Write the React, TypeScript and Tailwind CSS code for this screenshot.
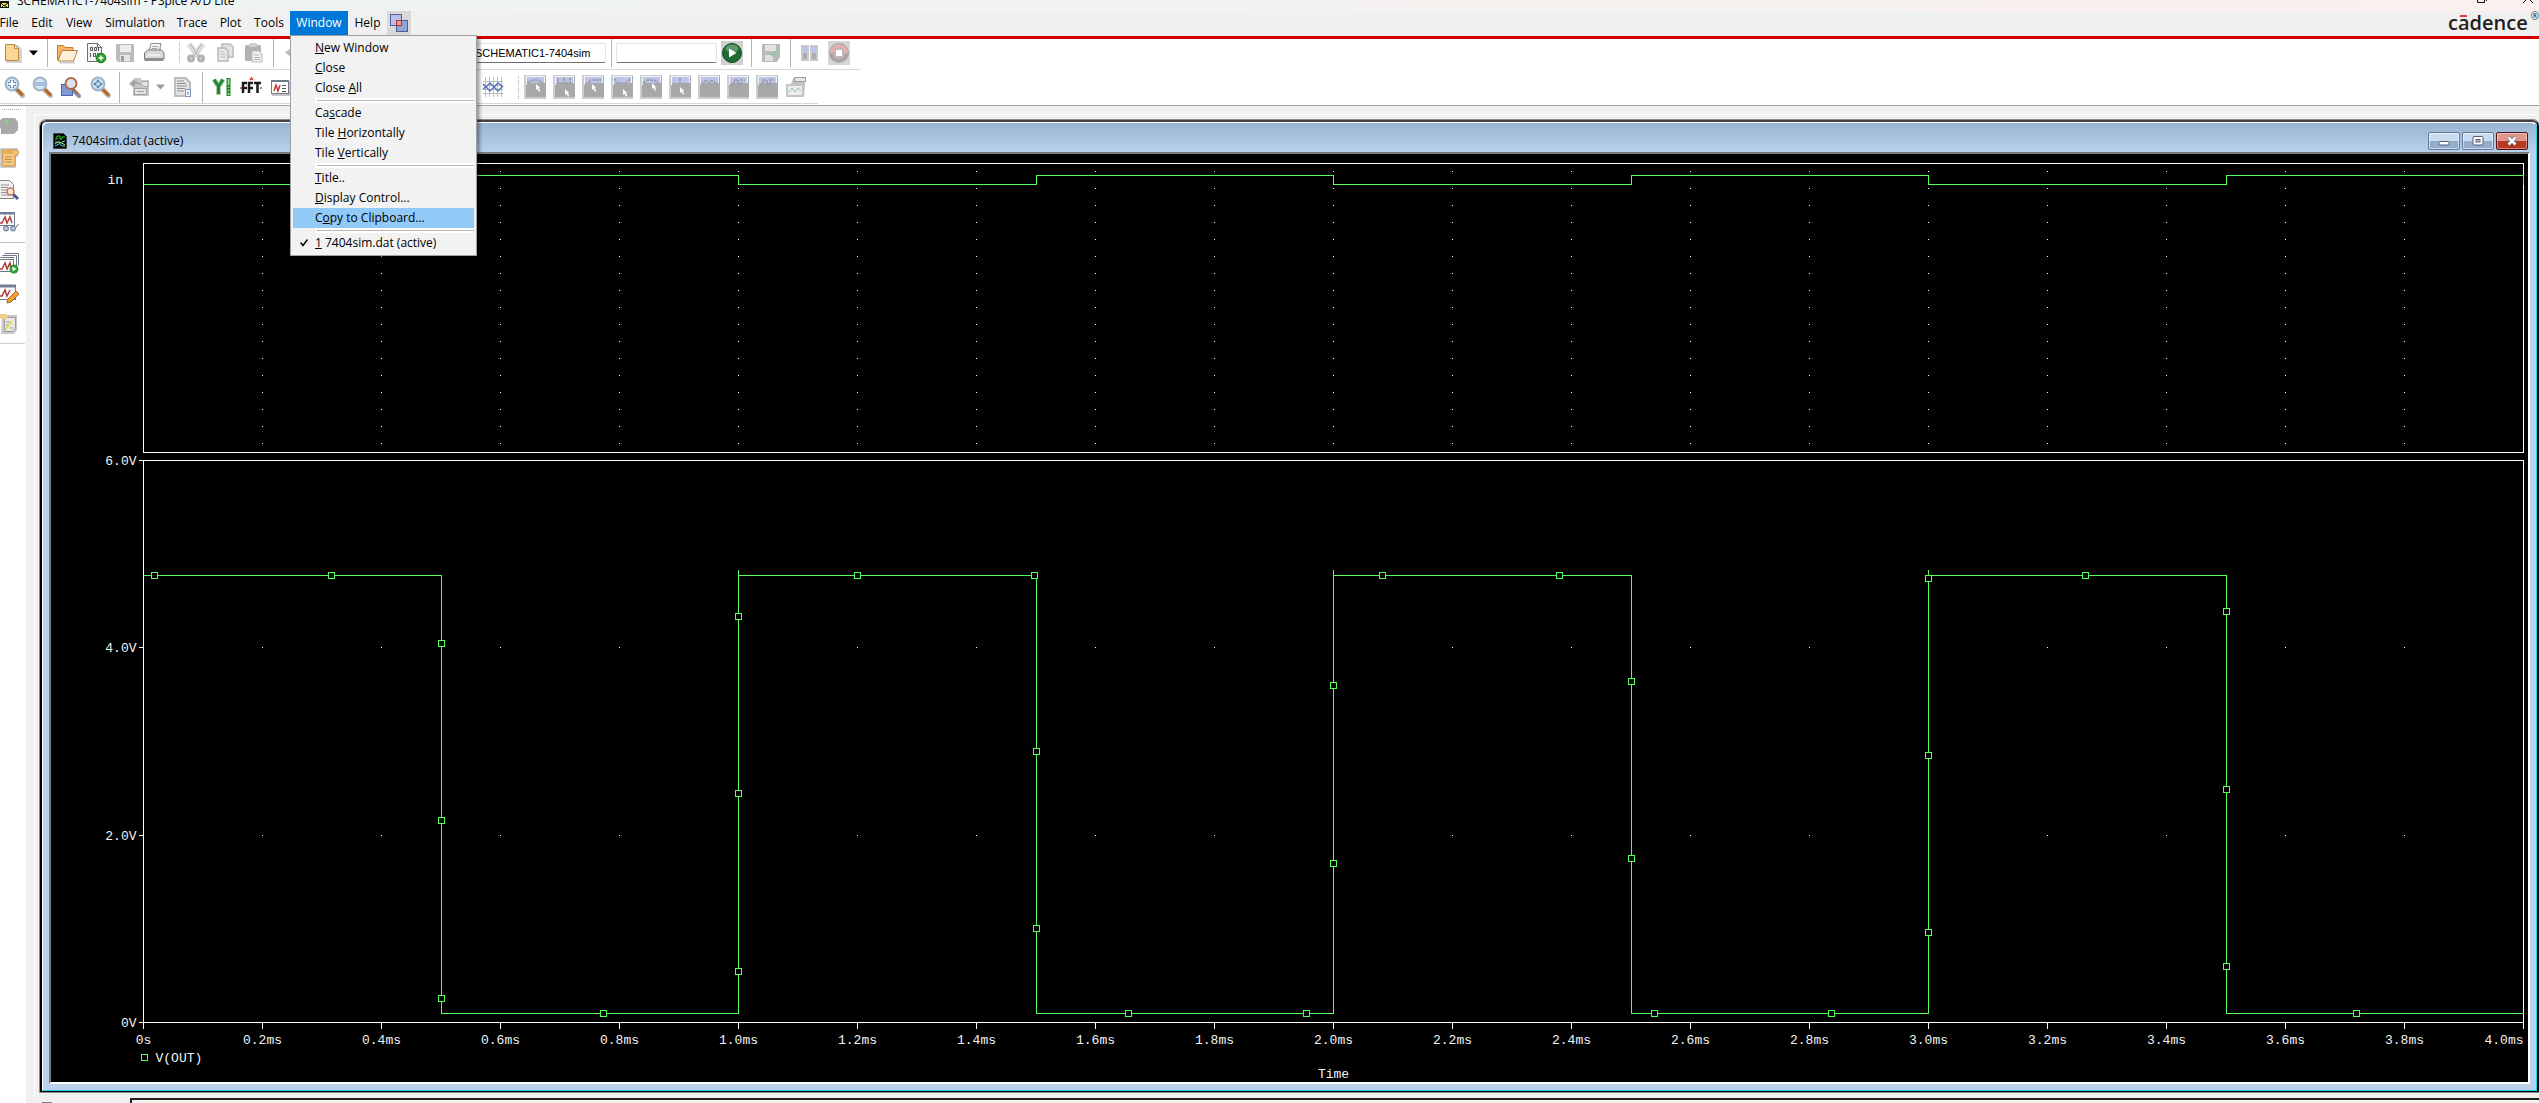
import type { ReactNode } from "react"
import clsx from "clsx"

const MENUS = [
  { label: "File", width: "w-[25px] pr-[7px]" },
  { label: "Edit", width: "w-[34px]" },
  { label: "View", width: "w-[40px]" },
  { label: "Simulation", width: "w-[72px]" },
  { label: "Trace", width: "w-[42px]" },
  { label: "Plot", width: "w-[35px]" },
  { label: "Tools", width: "w-[42px]" },
]

/* ---------- toolbar pieces ---------- */

function Tool({ label, children, className }: { label: string; children: ReactNode; className?: string }) {
  return (
    <button
      type="button"
      aria-label={label}
      className={clsx("flex shrink-0 items-center justify-center", className ?? "w-[29px]")}
    >
      {children}
    </button>
  )
}

function Icon({ children }: { children: ReactNode }) {
  return (
    <svg width="22" height="22" viewBox="0 0 22 22" fill="none" className="shrink-0">
      {children}
    </svg>
  )
}

function Sep() {
  return (
    <div className="flex h-full w-[10px] shrink-0 justify-center">
      <div className="h-full w-px bg-[#b4b4b4]" />
    </div>
  )
}

function Grip() {
  return (
    <div className="flex h-full w-[13px] shrink-0 justify-end py-1">
      <div className="mr-px h-full border-l border-dotted border-[#b0b0b0]" />
    </div>
  )
}

function Caret({ color }: { color: string }) {
  return (
    <svg width="10" height="6" viewBox="0 0 10 6">
      <path d="M0 0.5h9L4.5 5.5z" fill={color} />
    </svg>
  )
}

function Lens({ children }: { children?: ReactNode }) {
  return (
    <Icon>
      <path d="M13 13l6.5 6.500" stroke="#b9b9b9" strokeWidth="5" strokeLinecap="round" />
      <path d="M13.500 13l5.500 5.500" stroke="#b5651d" strokeWidth="3" strokeLinecap="round" />
      <circle cx="9" cy="8" r="6.400" fill="#d5e6f5" stroke="#9fb2c6" strokeWidth="2" />
      {children}
    </Icon>
  )
}

function CursorTool({ shape, arrow }: { shape: string; arrow?: [number, number] }) {
  return (
    <svg width="22" height="24" viewBox="0 0 22 24" fill="none">
      <rect width="22" height="24" fill="#cdcdcd" />
      <rect x="2" y="1" width="20" height="21" fill="#a8a8a8" />
      <rect x="2.500" y="1.500" width="18" height="8" fill="#bcc4ea" stroke="#f4f4f4" />
      <rect x="3" y="8" width="18" height="14" fill="#a8a8a8" />
      <path d={shape} stroke="#9da1b2" strokeWidth="2" strokeDasharray="3 1" />
      {arrow && (
        <path
          d={`M${arrow[0]} ${arrow[1]}v6l1.500-1.200l1.500 3l1.300-.7l-1.500-2.800h1.600z`}
          fill="#ffffff"
        />
      )}
    </svg>
  )
}

const CURSOR_TOOLS: { label: string; shape: string; arrow?: [number, number] }[] = [
  { label: "Cursor peak", shape: "M3 8c3-1 4-3 8-3s5 2 8 3", arrow: [12, 9] },
  { label: "Cursor trough", shape: "M5 3v5h12v-5M11 3v5", arrow: [12, 14] },
  { label: "Cursor slope", shape: "M3 9c4 0 4-4 8-4h8", arrow: [10, 9] },
  { label: "Cursor min", shape: "M3 4l4 4h8l4-4", arrow: [12, 14] },
  { label: "Cursor max", shape: "M3 8l5-3h6l5 3", arrow: [12, 8] },
  { label: "Cursor point", shape: "M11 3v6", arrow: [11, 12] },
  { label: "Cursor search", shape: "M3 9l4-3h2l2 2l2-2h2l4 3" },
  { label: "Cursor next transition", shape: "M4 10h3v-5h4v5h3v-5h4" },
  { label: "Cursor previous transition", shape: "M4 10h3v-5h4v5h3v-5h4" },
]

function MainToolbar() {
  return (
    <div className="flex h-[31px] w-[860px] border-b border-[#d6d6d6] pb-[2px]">
      <Tool label="New" className="w-[26px]">
        <Icon>
          <path d="M4 3h12l4 4v14H4z" fill="#d2d2d2" />
          <path d="M3.500 2.500h9l4 4v12h-13z" fill="#f7d792" stroke="#b98a3f" />
          <path d="M12.500 2.500v4h4z" fill="#fff3d0" stroke="#b98a3f" />
        </Icon>
      </Tool>
      <Tool label="New options" className="w-[16px]">
        <Caret color="#000000" />
      </Tool>
      <Sep />
      <Tool label="Open">
        <Icon>
          <path d="M1.500 18V3.500h6l1.500 2h8v3" fill="#f2b565" stroke="#c97b2c" />
          <path d="M2 19L6 8.500h15.500L17.500 19z" fill="#fdf0d8" stroke="#b77b3c" />
          <path d="M3 20.500h16" stroke="#cccccc" strokeWidth="2" />
        </Icon>
      </Tool>
      <Tool label="New simulation profile">
        <Icon>
          <path d="M2.500 1.500h10l4 4v14h-14z" fill="#f4f4f4" stroke="#707070" />
          <path d="M12.500 1.500v4h4z" fill="#ffffff" stroke="#707070" />
          <path d="M5.500 5.500h2v3h-2zM9.500 5.500h2v3h-2zM13.500 9V5M5.500 11v4M8.500 11.500h2v3h-2zM12.500 11v3" stroke="#555555" />
          <circle cx="16" cy="16" r="4.800" fill="#2fa02f" stroke="#1b7a1b" />
          <path d="M16 13.500v5M13.500 16h5" stroke="#ffffff" strokeWidth="1.500" />
        </Icon>
      </Tool>
      <Tool label="Save">
        <Icon>
          <path d="M2 2h18v18H4l-2-2z" fill="#bcbcbc" />
          <rect x="6" y="3" width="11" height="7" fill="#ececec" />
          <rect x="6" y="13" width="10" height="6" fill="#e6e6e6" />
          <rect x="7" y="14" width="3" height="5" fill="#9d9d9d" />
        </Icon>
      </Tool>
      <Tool label="Print">
        <Icon>
          <path d="M6 9l2-7.500h10L16.500 9z" fill="#f6f6f6" stroke="#8d8d8d" />
          <path d="M1.500 11l3-3h14l2.500 3v6h-19.500z" fill="#dadada" stroke="#777777" />
          <path d="M1.500 16h19v3h-19z" fill="#8f8f8f" />
          <path d="M5 13h12" stroke="#ffffff" />
          <path d="M9 4.500h6M8.500 6.500h6" stroke="#a5a5a5" />
        </Icon>
      </Tool>
      <Grip />
      <Tool label="Cut">
        <Icon>
          <path d="M4 2l9 12M18 2l-9 12" stroke="#d0d0d0" strokeWidth="5" />
          <path d="M4 2l9 12M18 2l-9 12" stroke="#f0f0f0" strokeWidth="2" />
          <path d="M5 2l8 12M17 2l-8 12" stroke="#b0b0b0" />
          <circle cx="6" cy="16.500" r="2.500" fill="#dddddd" stroke="#b2b2b2" strokeWidth="3" />
          <circle cx="16" cy="16.500" r="2.500" fill="#dddddd" stroke="#b2b2b2" strokeWidth="3" />
        </Icon>
      </Tool>
      <Tool label="Copy">
        <Icon>
          <path d="M8 2h8l3 3v10H8z" fill="#e2e2e2" stroke="#b8b8b8" strokeWidth="1.500" />
          <path d="M4 6h7l3 3v10H4z" fill="#e9e9e9" stroke="#b8b8b8" strokeWidth="1.500" />
          <path d="M6 10h5M6 12.500h6M6 15h6" stroke="#c2c2c2" />
        </Icon>
      </Tool>
      <Tool label="Paste">
        <Icon>
          <rect x="2" y="3" width="16" height="16" rx="1.500" fill="#b2b2b2" />
          <rect x="6" y="1" width="8" height="4" rx="1" fill="#cfcfcf" />
          <path d="M9 9h7l3 3v8H9z" fill="#efefef" stroke="#bdbdbd" />
          <path d="M11 13h5M11 15.500h6M11 17.500h6" stroke="#b8b8b8" />
        </Icon>
      </Tool>
      <Sep />
      <Tool label="Undo">
        <Icon>
          <path d="M9 6L3 10.500l6 4.500v-3c5 0 7 1 8 5c1-6-3-8-8-8z" fill="#c4b9ae" />
        </Icon>
      </Tool>
      <div className="flex grow items-center justify-end">
        <select
          aria-label="Simulation profile"
          className="h-[20px] w-[136px] appearance-none rounded-xs border border-[#e2e2e2] border-b-[#707070] bg-white pl-1 font-['Liberation_Sans'] text-[11px] leading-4 text-black"
        >
          <option>SCHEMATIC1-7404sim</option>
        </select>
      </div>
      <Sep />
      <div className="flex w-[101px] shrink-0 items-center">
        <input
          aria-label="Run to time"
          className="h-[20px] w-full rounded-xs border border-[#e2e2e2] border-b-[#707070] bg-white px-1 text-[11px]"
        />
      </div>
      <Tool label="Run">
        <svg width="22" height="24" viewBox="0 0 22 24">
          <rect width="22" height="24" fill="#cfcfcf" />
          <circle cx="11" cy="12" r="9.500" fill="#1f6b34" stroke="#144d24" />
          <ellipse cx="11" cy="7.500" rx="6.500" ry="4" fill="#5c9a6b" />
          <path d="M8 7.500v9l7.500-4.500z" fill="#ffffff" />
        </svg>
      </Tool>
      <Sep />
      <Tool label="Save check point">
        <Icon>
          <path d="M2 2h18v13l-3 5H2z" fill="#bababa" />
          <rect x="5" y="3" width="11" height="6" fill="#e4e4e4" />
          <rect x="5" y="13" width="8" height="6" fill="#dedede" />
          <path d="M10 11l3 3l6-7" stroke="#8cc995" strokeWidth="1.500" />
        </Icon>
      </Tool>
      <Sep />
      <Tool label="Pause">
        <Icon>
          <rect x="2" y="3" width="8" height="16" fill="#c8c8c8" />
          <rect x="11" y="3" width="8" height="16" fill="#c8c8c8" />
          <rect x="4" y="4" width="4" height="7" fill="#b9c4e8" />
          <rect x="13" y="4" width="4" height="7" fill="#b9c4e8" />
          <path d="M4 11h4v6H4zM13 11h4v6h-4z" fill="#acacac" />
        </Icon>
      </Tool>
      <Tool label="Stop">
        <svg width="22" height="24" viewBox="0 0 22 24">
          <rect width="22" height="24" fill="#d6d6d6" />
          <circle cx="11" cy="12" r="10" fill="#a6a6a6" />
          <path d="M2 12a9 9 0 0 1 18 0z" fill="#e9b0b0" />
          <circle cx="11" cy="12" r="6" fill="#c9b4b4" />
          <rect x="8" y="9" width="6" height="6" fill="#ffffff" />
        </svg>
      </Tool>
      <div className="w-[7px] shrink-0" />
    </div>
  )
}

function ProbeToolbar() {
  return (
    <div className="flex h-[35px] w-[818px] border-b border-[#d6d6d6] pt-[2px]">
      <Tool label="Zoom in" className="w-[27px]">
        <Lens>
          <path d="M9 4v8M5 8h8" stroke="#6f90b4" strokeWidth="4" />
          <path d="M9 4.500v7M5.500 8h7" stroke="#ffffff" strokeWidth="2" />
        </Lens>
      </Tool>
      <Tool label="Zoom out">
        <Lens>
          <path d="M4.500 8h9" stroke="#5f86b0" strokeWidth="3" />
          <path d="M5 8h8" stroke="#ffffff" />
        </Lens>
      </Tool>
      <Tool label="Zoom area">
        <Icon>
          <path d="M12 13l7 7" stroke="#8c8fa8" strokeWidth="4" strokeLinecap="round" />
          <path d="M13 13l5 5" stroke="#b5651d" strokeWidth="2" />
          <rect x="1.500" y="8.500" width="11" height="11" fill="#7d9ad6" stroke="#4b67ab" />
          <circle cx="11" cy="7.500" r="5.500" fill="#dbe4f3" stroke="#b06a4a" strokeWidth="2" />
        </Icon>
      </Tool>
      <Tool label="Zoom fit">
        <Lens>
          <path d="M9 3l2.500 3.500h-5zM9 13l2.500-3.500h-5zM4 8l3.500-2.500v5zM14 8l-3.500-2.500v5z" fill="#5f86b0" />
        </Lens>
      </Tool>
      <Sep />
      <Tool label="Replot">
        <Icon>
          <path d="M1 8l6-6h6v2h8v16H5v-8z" fill="#c6c6c6" />
          <path d="M2 7l5-4v3c4 0 6 1 7 4c-2-2-4-2-7-2v3z" fill="#a2a2a2" />
          <path d="M14 5.500h6v5h-4" fill="#e6e6e6" stroke="#a8a8a8" />
          <rect x="6.500" y="12.500" width="12" height="6" fill="#e4e4e4" stroke="#9f9f9f" />
          <path d="M9 15.500h7" stroke="#9f9f9f" />
        </Icon>
      </Tool>
      <Tool label="Replot options" className="w-[15px]">
        <Caret color="#9a9a9a" />
      </Tool>
      <Tool label="Log">
        <Icon>
          <path d="M2 1h12l5 5v15H2z" fill="#bdbdbd" />
          <path d="M4 3h9l4 4v12H4z" fill="#e3e3e3" />
          <path d="M5 5h7M5 7.500h9M5 10h10M5 12.500h8M5 15h7" stroke="#8f8f8f" />
          <rect x="13.500" y="13.500" width="5" height="7" fill="#f7f9ff" stroke="#8295bb" />
          <path d="M16 15.500v3" stroke="#5674b0" />
        </Icon>
      </Tool>
      <Sep />
      <Tool label="Add Y axis">
        <Icon>
          <path d="M3 3.500l4.500 7V19M12 3.500l-4.500 7" stroke="#b5c8b5" strokeWidth="5" />
          <path d="M3 3.500l4.500 7V18M12 3.500l-4.500 7" stroke="#1f8a2d" strokeWidth="3" />
          <path d="M17.500 2v18" stroke="#1f8a2d" strokeWidth="4" />
          <path d="M17.500 3v6M17.500 11v1M17.500 14v1M17.500 17v2" stroke="#a6e0a6" strokeWidth="1.500" />
        </Icon>
      </Tool>
      <Tool label="Fourier transform">
        <svg width="24" height="22" viewBox="0 0 24 22" fill="none">
          <path d="M1 12h2M21 12h2M11 4l1.500-2L14 4" stroke="#d23b3b" strokeWidth="1.500" />
          <path d="M4 17V7h4M4 12h4M10 17V7h4M10 12h4M15 7h7M18.500 7v10" stroke="#1a1a1a" strokeWidth="2.500" />
        </svg>
      </Tool>
      <Tool label="Performance analysis">
        <Icon>
          <rect x="3" y="5" width="18" height="15" fill="#c4c4c4" />
          <rect x="2.500" y="4.500" width="17" height="13" fill="#ffffff" stroke="#6f7a8c" />
          <path d="M2 5h18" stroke="#6f7a8c" strokeWidth="2" />
          <path d="M5 15l2-6l2 6l2-6" stroke="#c0392b" strokeWidth="1.500" />
          <path d="M13 9.500h4M13 12.500h4M13 15.500h4" stroke="#555555" />
        </Icon>
      </Tool>
      <div className="w-[184px] shrink-0" />
      <Tool label="Mark data points">
        <Icon>
          <path d="M3.500 1v20M7.500 1v20M11.500 1v20M15.500 1v20M19.500 1v20M1 5.500h20M1 9.500h20M1 13.500h20M1 17.500h20" stroke="#bdbdbd" />
          <path d="M1 8l3 3l4-4l4 4l4-4l5 4M1 13l3-2l4 4l4-4l4 4l5-5" stroke="#5b74b8" strokeWidth="1.500" />
        </Icon>
      </Tool>
      <Grip />
      {CURSOR_TOOLS.map((tool) => (
        <Tool key={tool.label} label={tool.label}>
          <CursorTool shape={tool.shape} arrow={tool.arrow} />
        </Tool>
      ))}
      <Tool label="Mark label">
        <Icon>
          <path d="M1 8h5l2-6h12v8l-1 11H1z" fill="#c4c4c4" />
          <rect x="9.500" y="1.500" width="11" height="4" fill="#e6e6e6" stroke="#9a9a9a" />
          <rect x="3" y="10" width="14" height="9" fill="#ececec" />
          <path d="M4 16l3-4l3 4l3-4l3 3" stroke="#9abf9e" />
        </Icon>
      </Tool>
    </div>
  )
}

/* ---------- left side bar ---------- */

function SideBar() {
  return (
    <aside className="flex w-[26px] shrink-0 flex-col bg-white pt-[3px]">
      <div className="mr-[5px] ml-[2px] border-t border-dotted border-[#a8a8a8]" />
      <div className="flex w-[18px] flex-col pb-1">
        <Tool label="Messages" className="h-8 w-[18px]">
          <Icon>
            <path d="M5 3h12l3 4v8l-4 4H3v-5l-2-2V6z" fill="#a9a9a9" />
            <path d="M8 8l2-2" stroke="#79e079" strokeWidth="2" />
          </Icon>
        </Tool>
        <Tool label="Output script" className="h-8 w-[18px]">
          <Icon>
            <path d="M1 1h19v9h-2v11H1z" fill="#cfcfcf" />
            <path d="M4 3h14a2 2 0 0 1 0 5h-1v11H5c-2 0-2-3 0-3z" fill="#f5c986" stroke="#c48a3a" />
            <path d="M4 3h12v4H4z" fill="#e9ad55" />
            <path d="M7 10h7M7 12.500h7M7 15h7" stroke="#c48a3a" />
          </Icon>
        </Tool>
        <Tool label="View output file" className="h-8 w-[18px]">
          <Icon>
            <path d="M1.500 1.500h10l4 4v14h-14z" fill="#f3f3f3" stroke="#858585" />
            <path d="M3 6h8M3 8.500h7M3 11h6M3 13.500h6M3 16h9" stroke="#8f8f8f" />
            <path d="M15 15l5 5" stroke="#4b5f8e" strokeWidth="3" />
            <circle cx="12.500" cy="12.500" r="3.500" fill="#fbe3d3" stroke="#c27b55" strokeWidth="1.500" />
          </Icon>
        </Tool>
        <Tool label="View results" className="h-8 w-[18px]">
          <Icon>
            <rect x="1.500" y="1.500" width="15" height="13" fill="#ffffff" stroke="#717e95" />
            <path d="M1 2.500h16" stroke="#717e95" strokeWidth="2" />
            <path d="M2 12h2l3-6l2 6l3-6l2 6" stroke="#b23a3a" strokeWidth="1.500" />
            <circle cx="8" cy="17.500" r="2.500" fill="#b9c4df" stroke="#65718f" />
            <circle cx="15" cy="17.500" r="2.500" fill="#b9c4df" stroke="#65718f" />
            <path d="M17.500 17l3-4" stroke="#65718f" />
          </Icon>
        </Tool>
      </div>
      <div className="mr-px border-t border-[#bdbdbd]" />
      <div className="flex w-[18px] flex-col py-1">
        <Tool label="Run queue" className="h-8 w-[18px]">
          <Icon>
            <path d="M6.500 1.500h14v12M4.500 3.500h14v12M2.500 5.500h14" stroke="#6d7686" />
            <rect x="1.500" y="7.500" width="14" height="12" fill="#ffffff" stroke="#6d7686" />
            <path d="M2 17h2l3-6l2 6l3-6l1 6" stroke="#b23a3a" strokeWidth="1.500" />
            <circle cx="16" cy="17" r="4.500" fill="#2d9c37" />
            <path d="M14.500 14.500v5l4-2.500z" fill="#ffffff" />
          </Icon>
        </Tool>
        <Tool label="Edit profile" className="h-[30px] w-[18px]">
          <Icon>
            <rect x="1.500" y="2.500" width="16" height="14" fill="#ffffff" stroke="#717e95" />
            <path d="M1 3h17" stroke="#717e95" strokeWidth="3" />
            <path d="M2 13h2l3-6l2 6l3-6" stroke="#b23a3a" strokeWidth="1.500" />
            <path d="M9 20l1-4l8-8l3 3l-8 8z" fill="#f3a32b" stroke="#a8621a" />
          </Icon>
        </Tool>
        <Tool label="Edit notes" className="h-[30px] w-[18px]">
          <Icon>
            <path d="M4 2h15v15l-3 4H3z" fill="#c9c9c9" />
            <path d="M6.500 4.500h11v11l-3 3h-8z" fill="#e8e8e8" stroke="#9a9a9a" />
            <path d="M0 1h8l3 3l-3 2H3z" fill="#efcf8d" />
            <path d="M7 17l7-9" stroke="#e5dc4b" strokeWidth="2" />
            <path d="M8 9h4M8 12h2M12 15h3" stroke="#a0a0a0" />
          </Icon>
        </Tool>
      </div>
      <div className="mr-px border-t border-[#cfcfcf]" />
    </aside>
  )
}

/* ---------- Window drop-down ---------- */

function MenuItem({ children, active, checked }: { children: ReactNode; active?: boolean; checked?: boolean }) {
  return (
    <button
      type="button"
      role="menuitem"
      className={clsx("flex h-5 w-full items-center text-left whitespace-nowrap", active && "bg-[#91c9f7]")}
    >
      <span className="flex w-[22px] shrink-0 justify-center">
        {checked && (
          <svg width="8" height="8" viewBox="0 0 8 8" fill="none">
            <path d="M0.500 3.500l2.500 3l4.500-6" stroke="#000000" strokeWidth="1.500" />
          </svg>
        )}
      </span>
      <span>{children}</span>
    </button>
  )
}

function MenuLine() {
  return (
    <div className="ml-[22px] flex h-[5px] items-center bg-white pl-[2px]">
      <div className="h-px w-full bg-[#b8b8b8]" />
    </div>
  )
}

function WindowMenu() {
  return (
    <div
      role="menu"
      className="absolute top-6 left-0 z-10 w-[187px] border border-[#a0a0a0] bg-[#f2f2f2] p-[2px] text-black shadow-[3px_3px_3px_rgba(0,0,0,0.35)]"
    >
      <MenuItem><u>N</u>ew Window</MenuItem>
      <MenuItem><u>C</u>lose</MenuItem>
      <MenuItem>Close <u>A</u>ll</MenuItem>
      <MenuLine />
      <MenuItem>Ca<u>s</u>cade</MenuItem>
      <MenuItem>Tile <u>H</u>orizontally</MenuItem>
      <MenuItem>Tile <u>V</u>ertically</MenuItem>
      <MenuLine />
      <MenuItem><u>T</u>itle..</MenuItem>
      <MenuItem><u>D</u>isplay Control...</MenuItem>
      <MenuItem active>C<u>o</u>py to Clipboard...</MenuItem>
      <MenuLine />
      <MenuItem checked><u>1</u> 7404sim.dat (active)</MenuItem>
    </div>
  )
}

function MenuBar() {
  return (
    <nav className="flex h-[25px] bg-[#f0f0f0]">
      {MENUS.map((menu) => (
        <button
          key={menu.label}
          type="button"
          className={clsx("flex h-6 shrink-0 items-center justify-center whitespace-nowrap", menu.width)}
        >
          {menu.label}
        </button>
      ))}
      <div className="relative w-[58px] shrink-0">
        <button type="button" aria-expanded="true" className="h-6 w-full bg-[#0078d7] text-white">
          Window
        </button>
        <WindowMenu />
      </div>
      <button type="button" className="h-6 w-[39px] shrink-0">
        Help
      </button>
      <button type="button" aria-label="Switch window" className="flex h-6 w-6 items-center justify-center bg-[#d9d9d9]">
        <svg width="20" height="20" viewBox="0 0 20 20">
          <rect x="1.500" y="1.500" width="11" height="11" fill="#b6c1e3" stroke="#4c5f9b" />
          <rect x="7.500" y="7.500" width="11" height="11" fill="#93a5d8" stroke="#4c5f9b" />
          <rect x="7.500" y="7.500" width="5" height="5" fill="#e79a9a" stroke="#b53434" />
        </svg>
      </button>
      <div className="ml-auto flex items-start gap-[3px] text-[#231f20]">
        <span className="text-xl leading-6 font-semibold">
          c
          <span className="relative">
            a
            <span className="absolute top-[6px] left-[2px] h-[2px] w-[7px] bg-[#e03a3a]" />
          </span>
          dence
        </span>
        <span className="text-[10px] leading-[10px]">®</span>
      </div>
    </nav>
  )
}

/* ---------- waveform chart ---------- */

const LEFT = 92
const RIGHT = 2472
const DIV = 119
const EDGES = [390, 687, 985, 1282, 1580, 1877, 2175]
const HIGH = 421
const LOW = 859

const MARKERS: [number, number][] = [
  [103, 421], [280, 421], [390, 489], [390, 666], [390, 844], [552, 859],
  [687, 817], [687, 639], [687, 462], [806, 421], [983, 421], [985, 597], [985, 774],
  [1077, 859], [1255, 859], [1282, 709], [1282, 531], [1331, 421], [1508, 421],
  [1580, 527], [1580, 704], [1603, 859], [1780, 859], [1877, 778], [1877, 601], [1877, 424],
  [2034, 421], [2175, 457], [2175, 635], [2175, 812], [2305, 859],
]

const timeLabel = (i: number) => (i === 0 ? "0s" : `${(i * 0.2).toFixed(1)}ms`)

function inputPath() {
  let d = `M${LEFT} 30`
  EDGES.forEach((x, i) => {
    d += `H${x}V${i % 2 === 0 ? 21 : 30}`
  })
  return `${d}H${RIGHT}V30`
}

// rising edges overshoot the flat top by a few pixels
function outputPath() {
  let d = `M${LEFT} ${HIGH}`
  EDGES.forEach((x, i) => {
    d += i % 2 === 0 ? `H${x}V${LOW}` : `H${x}V415V${HIGH}`
  })
  return `${d}H${RIGHT}`
}

function Chart() {
  const columns = Array.from({ length: 19 }, (_, i) => LEFT + DIV * (i + 1))
  const rows = Array.from({ length: 17 }, (_, i) => 17 + 17 * i)

  return (
    <svg viewBox="0 0 2477 928" className="block h-auto w-full bg-black" shapeRendering="crispEdges" fill="none">
      <g transform="translate(0.5 0.5)">
        <g fill="#ffffff">
          {columns.map((x) =>
            [...rows, 493, 681].map((y) => <rect key={`${x}-${y}`} x={x - 0.5} y={y - 0.5} width="1" height="1" />)
          )}
        </g>
        <g stroke="#ffffff">
          <rect x={LEFT} y="9" width={RIGHT - LEFT} height="289" />
          <rect x={LEFT} y="306" width={RIGHT - LEFT} height="562" />
          {[306, 493, 681, 868].map((y) => (
            <path key={y} d={`M${LEFT - 5} ${y}h5`} />
          ))}
          {Array.from({ length: 21 }, (_, i) => (
            <path key={i} d={`M${LEFT + DIV * i} 868v6`} />
          ))}
        </g>
        <g stroke="#55ff55">
          <path d={inputPath()} />
          <path d={outputPath()} />
          {MARKERS.map(([x, y]) => (
            <rect key={`${x}-${y}`} x={x - 3} y={y - 3} width="6" height="6" fill="#000000" />
          ))}
          <rect x="90" y="900" width="6" height="6" />
        </g>
        <g fill="#f4f4f4" className="font-['Liberation_Mono',monospace] text-[13px]">
          <text x="56" y="29">in</text>
          {["6.0V", "4.0V", "2.0V", "0V"].map((label, i) => (
            <text key={label} x="85" y={[310, 497, 685, 872][i]} textAnchor="end">
              {label}
            </text>
          ))}
          {Array.from({ length: 21 }, (_, i) => (
            <text key={i} x={LEFT + DIV * i} y="889" textAnchor={i === 20 ? "end" : "middle"}>
              {timeLabel(i)}
            </text>
          ))}
          <text x="104" y="907">V(OUT)</text>
          <text x="1282" y="923" textAnchor="middle">Time</text>
        </g>
      </g>
    </svg>
  )
}

/* ---------- child window ---------- */

const CAPTION_BUTTON =
  "flex h-[18px] w-8 items-center justify-center rounded-xs border border-[#5f7a9c] bg-linear-to-b from-[#c9dbee] from-50% to-[#93aecb] to-50% shadow-[inset_0_0_0_1px_rgba(255,255,255,0.55)]"

function PlotWindow() {
  return (
    <section className="rounded-t-md border-2 border-b border-t-[#444444] border-r-black border-b-black border-l-black bg-[#b9d1ea] outline outline-[#8c8c8c]">
      <div className="rounded-t-md border border-t-white border-r-[#19d3e6] border-b-[#19d3e6] border-l-white px-[6px] pb-[6px]">
        <header className="-mx-[6px] flex h-[29px] items-center gap-[5px] rounded-t-md bg-linear-to-b from-[#99b4d1] to-[#b9d1ea] pt-[6px] pr-2 pl-[10px]">
          <svg width="14" height="16" viewBox="0 0 14 16" fill="none">
            <path d="M0.500 0.500h10l3 3v12h-13z" fill="#000000" stroke="#444444" />
            <path d="M2 6h2V3h3v3h2V4h3" stroke="#27e027" />
            <path d="M2 11l3-2h2l5 3" stroke="#f3e33a" />
            <path d="M2 13l4-2l3-2l3-1M2 9h3l4 4h3" stroke="#3adfe6" />
          </svg>
          <span className="grow leading-4">7404sim.dat (active)</span>
          <div className="flex gap-[2px]">
            <button type="button" aria-label="Minimize" className={CAPTION_BUTTON}>
              <svg width="12" height="10" viewBox="0 0 12 10">
                <rect x="1" y="5.500" width="10" height="3.500" rx="1" fill="#ffffff" stroke="#565d73" />
              </svg>
            </button>
            <button type="button" aria-label="Maximize" className={CAPTION_BUTTON}>
              <svg width="12" height="10" viewBox="0 0 12 10">
                <rect x="1" y="0.500" width="10" height="8.500" rx="1" fill="#ffffff" stroke="#565d73" />
                <rect x="4" y="3.500" width="4" height="2.500" fill="#b7cbe0" stroke="#565d73" />
              </svg>
            </button>
            <button
              type="button"
              aria-label="Close"
              className="flex h-[18px] w-8 items-center justify-center rounded-xs border border-[#4a1420] bg-linear-to-b from-[#e0968a] from-50% to-[#b8391f] to-50% shadow-[inset_0_0_0_1px_rgba(255,255,255,0.4)]"
            >
              <svg width="12" height="10" viewBox="0 0 12 10" fill="none">
                <path d="M2.500 1.500l7 7M9.500 1.500l-7 7" stroke="#565d73" strokeWidth="4" />
                <path d="M2.500 1.500l7 7M9.500 1.500l-7 7" stroke="#ffffff" strokeWidth="2.500" />
              </svg>
            </button>
          </div>
        </header>
        <div className="border-2 border-t-[#7a7a7a] border-r-white border-b-white border-l-[#7a7a7a]">
          <Chart />
        </div>
      </div>
    </section>
  )
}

export default function App() {
  return (
    <div className="flex h-screen flex-col overflow-hidden bg-white font-['Open_Sans',sans-serif] text-xs text-black">
      <div className="flex h-[11px] shrink-0 items-end overflow-hidden bg-linear-to-r from-[#ecf4f4] to-[#fbf0ed] pb-[2px]">
        <svg width="10" height="8" viewBox="0 0 10 8" className="mr-[7px] shrink-0">
          <rect width="9" height="7" fill="#111111" />
          <path d="M1 2h7v4H1z" fill="#f0e83c" />
          <path d="M1 2l3 3l4-3M2 6l2-2l3 2" stroke="#111111" fill="none" />
        </svg>
        <span className="leading-4">SCHEMATIC1-7404sim - PSpice A/D Lite</span>
        <svg width="62" height="9" viewBox="0 0 62 9" fill="none" className="ml-auto shrink-0" stroke="#111111">
          <path d="M0.500 0v2.500h7v-2.500M9.500 0v1" />
          <path d="M46 3l5-5l5 5" />
        </svg>
      </div>
      <MenuBar />
      <div className="h-[3px] shrink-0 bg-[#d00000]" />
      <MainToolbar />
      <ProbeToolbar />
      <div className="mt-px h-px shrink-0 bg-[#a0a0a0]" />
      <div className="flex min-h-0 grow">
        <SideBar />
        <main className="flex min-w-0 grow flex-col bg-[#f0f0f0] pt-2 pl-2">
          <div className="border-t border-l border-white pt-[5px] pb-[6px] pl-[5px]">
            <PlotWindow />
          </div>
          <div className="flex grow pl-2">
            <div className="mt-1 h-2 w-[10px] bg-[#808080]" />
            <div className="ml-[78px] grow border-t-2 border-l-2 border-t-[#222222] border-l-[#222222] bg-[#f2f2ee]" />
          </div>
        </main>
      </div>
    </div>
  )
}
